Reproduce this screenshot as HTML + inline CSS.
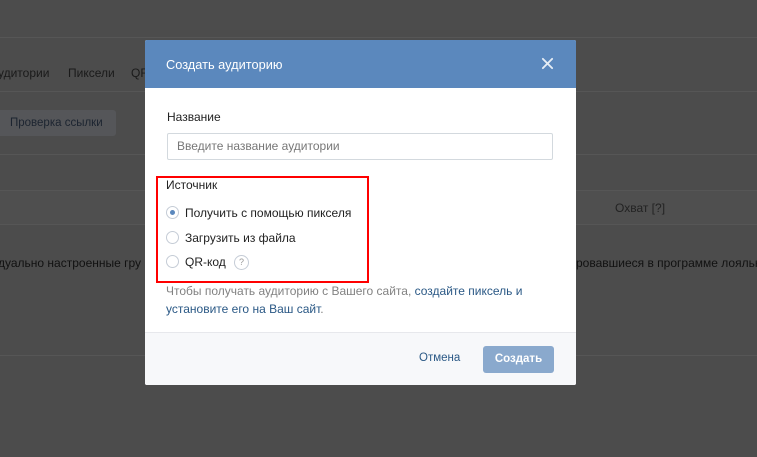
<!DOCTYPE html>
<html><head><meta charset="utf-8"><style>
*{margin:0;padding:0;box-sizing:border-box}
body{width:757px;height:457px;background:#4c4c4c;font-family:"Liberation Sans",sans-serif;font-size:12px;position:relative;overflow:hidden}
.l{position:absolute;left:0;right:0;height:1px;background:#565656}
.t{position:absolute;color:#1a1a1a;white-space:nowrap}
.modal{position:absolute;left:145px;top:40px;width:431px;height:345px;background:#fff;border-radius:2px;overflow:hidden}
.hd{height:48px;background:#5b88bd;color:#fff;font-size:12.8px;padding:17px 0 0 21px;position:relative}
.x{position:absolute;right:22px;top:17px;width:13px;height:13px}
.ft{position:absolute;left:0;right:0;bottom:0;height:53px;background:#f7f8fa;border-top:1px solid #e7e8ec}
.m{position:absolute;white-space:nowrap;color:#222}
.r{position:absolute;width:13px;height:13px;border:1px solid #c5ccd6;border-radius:50%;background:#fff}
</style></head><body>
<div class="l" style="top:37px"></div>
<div class="t" style="left:-2px;top:66px">удитории</div>
<div class="t" style="left:68px;top:66px">Пиксели</div>
<div class="t" style="left:131px;top:66px">QR</div>
<div class="l" style="top:91px"></div>
<div style="position:absolute;left:-5px;top:110px;width:121px;height:26px;background:#555659;border-radius:3px"></div>
<div class="t" style="left:10px;top:117px;font-size:11.5px;color:#1c2430">Проверка ссылки</div>
<div class="l" style="top:154px"></div>
<div style="position:absolute;left:0;right:0;top:190px;height:35px;background:#4f4f4f;border-top:1px solid #565656;border-bottom:1px solid #565656"></div>
<div class="t" style="left:615px;top:201px;color:#222">Охват [?]</div>
<div class="t" style="left:-2px;top:256px;color:#111">дуально настроенные гру</div>
<div class="t" style="left:576px;top:256px;color:#111">ровавшиеся в программе лояльн</div>
<div class="l" style="top:355px"></div>
<div class="modal">
<div class="hd">Создать аудиторию
<svg class="x" viewBox="0 0 14 14"><path d="M2 2L12 12M12 2L2 12" stroke="#fff" stroke-width="2" stroke-linecap="round" opacity=".85"/></svg></div>
<div class="m" style="left:22px;top:70px">Название</div>
<div style="position:absolute;left:22px;top:93px;width:386px;height:27px;border:1px solid #d3d9de;border-radius:2px"></div>
<div class="m" style="left:32px;top:99px;color:#777">Введите название аудитории</div>
<div style="position:absolute;left:11px;top:136px;width:213px;height:107px;border:2px solid #f00"></div>
<div class="m" style="left:21px;top:138px">Источник</div>
<div class="r" style="left:21px;top:166px"></div><div style="position:absolute;left:25px;top:170px;width:5px;height:5px;border-radius:50%;background:#5b88bd"></div>
<div class="m" style="left:40px;top:166px">Получить с помощью пикселя</div>
<div class="r" style="left:21px;top:191px"></div>
<div class="m" style="left:40px;top:191px">Загрузить из файла</div>
<div class="r" style="left:21px;top:215px"></div>
<div class="m" style="left:40px;top:215px">QR-код</div>
<div style="position:absolute;left:89px;top:215px;width:15px;height:15px;border:1px solid #c5ccd6;border-radius:50%;font-size:9px;color:#999;text-align:center;line-height:13px">?</div>
<div class="m" style="left:21px;top:242px;color:#828282;line-height:18px">Чтобы получать аудиторию с Вашего сайта, <span style="color:#2a5885">создайте пиксель и<br>установите его на Ваш сайт</span>.</div>
<div class="ft">
<div class="m" style="left:274px;top:19px;font-size:11.5px;color:#2a5885">Отмена</div>
<div style="position:absolute;left:338px;top:13px;width:71px;height:27px;background:#8aa9cd;border-radius:3px;color:#fff;font-size:11.5px;font-weight:bold;text-align:center;line-height:27px">Создать</div>
</div>
</div>
</body></html>
